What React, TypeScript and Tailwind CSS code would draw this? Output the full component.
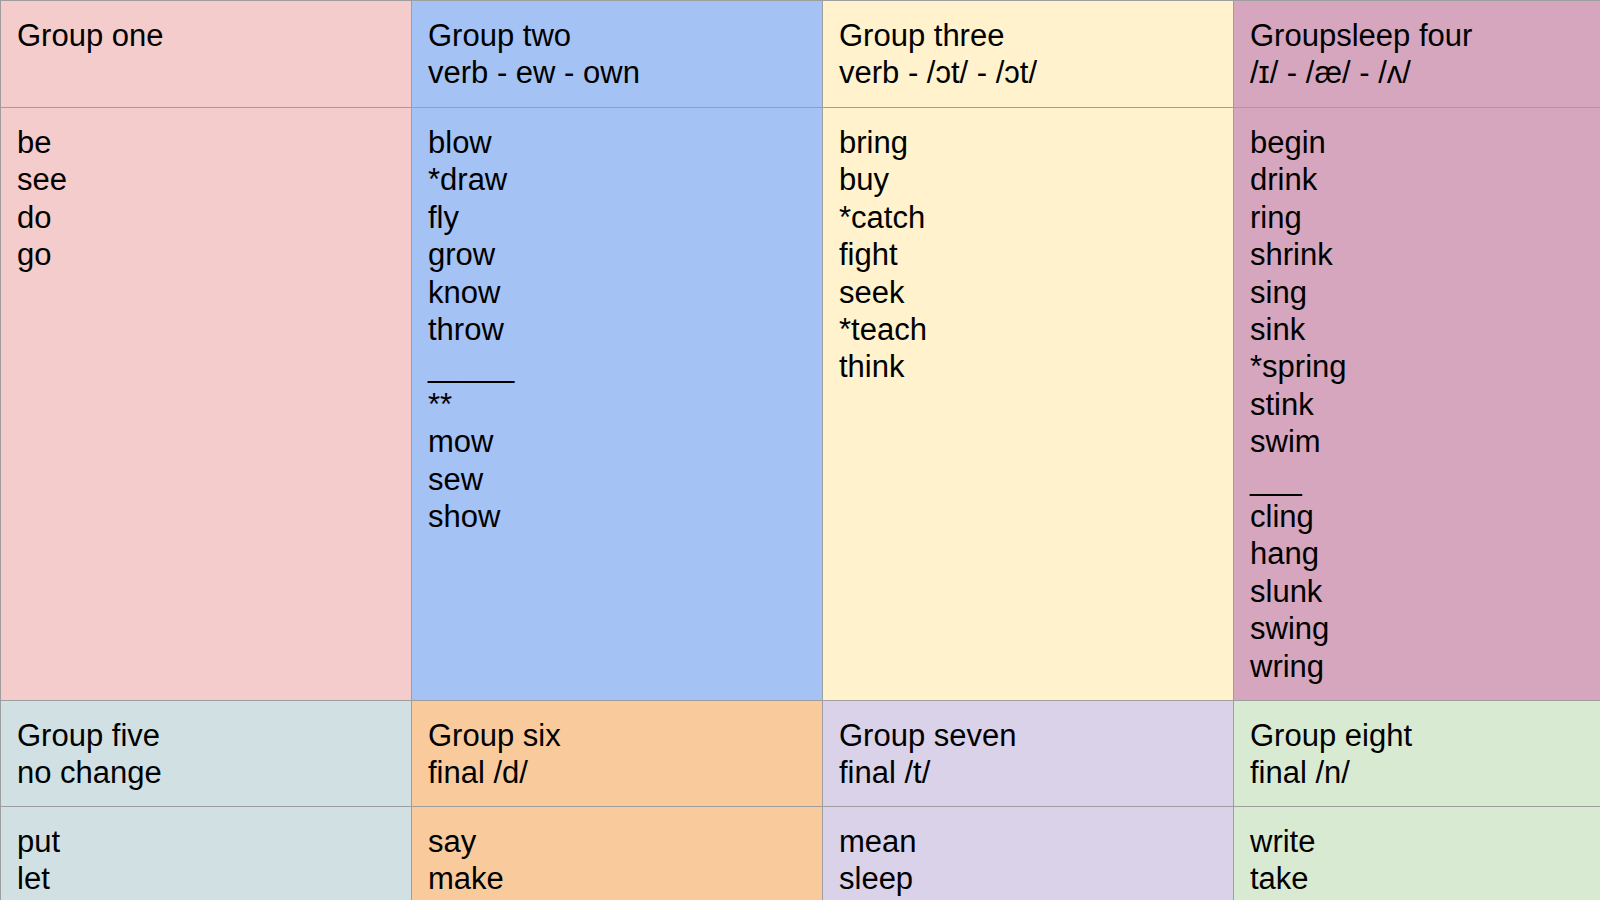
import React from "react";

type Cell = { bg: string; lines: string[] };

const header1: Cell[] = [
  { bg: "bg-[#f4cccc]", lines: ["Group one"] },
  { bg: "bg-[#a4c2f4]", lines: ["Group two", "verb - ew - own"] },
  { bg: "bg-[#fff2cc]", lines: ["Group three", "verb - /ɔt/ - /ɔt/"] },
  { bg: "bg-[#d5a6bd]", lines: ["Groupsleep four", "/ɪ/ - /æ/ - /ʌ/"] },
];

const body1: Cell[] = [
  { bg: "bg-[#f4cccc]", lines: ["be", "see", "do", "go"] },
  {
    bg: "bg-[#a4c2f4]",
    lines: ["blow", "*draw", "fly", "grow", "know", "throw", "_____", "**", "mow", "sew", "show"],
  },
  { bg: "bg-[#fff2cc]", lines: ["bring", "buy", "*catch", "fight", "seek", "*teach", "think"] },
  {
    bg: "bg-[#d5a6bd]",
    lines: [
      "begin",
      "drink",
      "ring",
      "shrink",
      "sing",
      "sink",
      "*spring",
      "stink",
      "swim",
      "___",
      "cling",
      "hang",
      "slunk",
      "swing",
      "wring",
    ],
  },
];

const header2: Cell[] = [
  { bg: "bg-[#d0e0e3]", lines: ["Group five", "no change"] },
  { bg: "bg-[#f9cb9c]", lines: ["Group six", "final /d/"] },
  { bg: "bg-[#d9d2e9]", lines: ["Group seven", "final /t/"] },
  { bg: "bg-[#d9ead3]", lines: ["Group eight", "final /n/"] },
];

const body2: Cell[] = [
  { bg: "bg-[#d0e0e3]", lines: ["put", "let"] },
  { bg: "bg-[#f9cb9c]", lines: ["say", "make"] },
  { bg: "bg-[#d9d2e9]", lines: ["mean", "sleep"] },
  { bg: "bg-[#d9ead3]", lines: ["write", "take"] },
];

function Row({ cells, h }: { cells: Cell[]; h: string }) {
  return (
    <div className="flex">
      {cells.map((c, i) => (
        <div
          key={i}
          className={`${c.bg} ${h} w-[411px] shrink-0 border-r border-b border-[#9e9e9e] pl-[16px] pt-[16px] pb-[15px] whitespace-pre`}
        >
          {c.lines.map((l, j) => (
            <div key={j}>{l}</div>
          ))}
        </div>
      ))}
    </div>
  );
}

export default function App() {
  return (
    <div className="w-[1600px] h-[900px] overflow-hidden bg-white">
      <div
        className="w-[1645px] border-l border-t border-[#9e9e9e] text-black text-[31px] leading-[37.4px]"
        style={{ fontFamily: '"Liberation Sans", Arial, sans-serif' }}
      >
        <Row cells={header1} h="h-[107px]" />
        <Row cells={body1} h="h-[593px]" />
        <Row cells={header2} h="h-[106px]" />
        <Row cells={body2} h="h-[200px]" />
      </div>
    </div>
  );
}
